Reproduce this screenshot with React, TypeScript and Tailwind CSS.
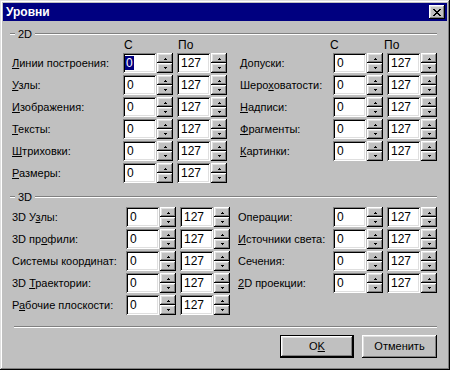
import React from 'react';

const raised =
  'shadow-[inset_-1px_-1px_0_#000,inset_1px_1px_0_#fff,inset_-2px_-2px_0_#808080,inset_2px_2px_0_#dfdfdf]';
const sunken =
  'shadow-[inset_1px_1px_0_#808080,inset_-1px_-1px_0_#fff,inset_2px_2px_0_#000,inset_-2px_-2px_0_#dfdfdf]';

type Label = [string, string, string];

const left2d: Label[] = [
  ['', 'Л', 'инии построения:'],
  ['', 'У', 'злы:'],
  ['', 'И', 'зображения:'],
  ['', 'Т', 'ексты:'],
  ['', 'Ш', 'триховки:'],
  ['', 'Р', 'азмеры:'],
];
const right2d: Label[] = [
  ['', 'Д', 'опуски:'],
  ['Шеро', 'х', 'оватости:'],
  ['', 'Н', 'адписи:'],
  ['', 'Ф', 'рагменты:'],
  ['', 'К', 'артинки:'],
];
const left3d: Label[] = [
  ['3D У', 'з', 'лы:'],
  ['3D пр', 'о', 'фили:'],
  ['Системы координат:', '', ''],
  ['3D ', 'Т', 'раектории:'],
  ['Р', 'а', 'бочие плоскости:'],
];
const right3d: Label[] = [
  ['Операции:', '', ''],
  ['', 'И', 'сточники света:'],
  ['Сечения:', '', ''],
  ['', '2', 'D проекции:'],
];

const Arrow = ({ down }: { down?: boolean }) => (
  <svg width="5" height="3" viewBox="0 0 5 3" shapeRendering="crispEdges">
    {down ? (
      <>
        <rect x="1" y="0" width="3" height="1" fill="#000" />
        <rect x="2" y="1" width="1" height="1" fill="#000" />
      </>
    ) : (
      <>
        <rect x="2" y="1" width="1" height="1" fill="#000" />
        <rect x="1" y="2" width="3" height="1" fill="#000" />
      </>
    )}
  </svg>
);

const Spin = () => (
  <div className="flex flex-col w-[16px] h-[20px]">
    <div className={`h-[10px] bg-[#c0c0c0] flex items-center justify-center ${raised}`}>
      <Arrow />
    </div>
    <div className={`h-[10px] bg-[#c0c0c0] flex items-center justify-center ${raised}`}>
      <Arrow down />
    </div>
  </div>
);

const Field = ({ value, selected }: { value: string; selected?: boolean }) => (
  <div className="flex gap-[1px]">
    <div
      className={`w-[33px] h-[20px] bg-white flex items-center text-[12px] text-black ${sunken} ${
        selected ? 'pl-[2px]' : 'pl-[4px]'
      }`}
    >
      {selected ? (
        <span className="bg-[#000080] text-white px-[1px] h-[14px] leading-[14px] inline-block">{value}</span>
      ) : (
        value
      )}
    </div>
    <Spin />
  </div>
);

const Text = ({ l }: { l: Label }) => (
  <span className="whitespace-nowrap">
    {l[0]}
    {l[1] && <span className="underline underline-offset-[1px]">{l[1]}</span>}
    {l[2]}
  </span>
);

const Half = ({ l, w, selected }: { l?: Label; w: string; selected?: boolean }) =>
  l ? (
    <div className="flex items-center">
      <div className={w}>
        <Text l={l} />
      </div>
      <Field value="0" selected={selected} />
      <div className="ml-[4px]">
        <Field value="127" />
      </div>
    </div>
  ) : (
    <div />
  );

const Group = ({ title }: { title: string }) => (
  <div className="flex items-center h-[10px]">
    <div className="w-[5px] h-[2px] border-t border-[#808080] border-b border-b-white" />
    <span className="px-[3px] leading-[10px]">{title}</span>
    <div className="flex-1 h-[2px] border-t border-[#808080] border-b border-b-white" />
  </div>
);

const Headers = ({ w }: { w: string }) => (
  <div className="flex text-[12px]">
    <div className={w} />
    <div className="w-[54px] pl-[1px]">С</div>
    <div className="w-[54px] pl-[1px]">По</div>
  </div>
);

const CloseGlyph = () => {
  const rows = ['XX....XX', '.XX..XX.', '..XXXX..', '...XX...', '..XXXX..', '.XX..XX.', 'XX....XX'];
  return (
    <svg width="8" height="7" viewBox="0 0 8 7" shapeRendering="crispEdges">
      {rows.flatMap((r, y) =>
        r.split('').map((c, x) => (c === 'X' ? <rect key={`${x}-${y}`} x={x} y={y} width="1" height="1" fill="#000" /> : null))
      )}
    </svg>
  );
};

export default function App() {
  return (
    <div
      className="w-[450px] h-[370px] bg-[#c0c0c0] px-[3px] pt-[3px] text-[11px] text-black shadow-[inset_-1px_-1px_0_#000,inset_1px_1px_0_#dfdfdf,inset_-2px_-2px_0_#808080,inset_2px_2px_0_#fff]"
      style={{ fontFamily: '"Liberation Sans", Arial, sans-serif' }}
    >
      {/* title bar */}
      <div className="h-[18px] bg-[#000080] flex items-center justify-between pl-[3px] pr-[2px]">
        <span className="text-white font-bold text-[12px]">Уровни</span>
        <div className={`w-[16px] h-[14px] bg-[#c0c0c0] flex items-center justify-center ${raised}`}>
          <CloseGlyph />
        </div>
      </div>

      <div className="pl-[7px] pr-[10px]">
        <div className="mt-[8px]">
          <Group title="2D" />
        </div>
        <div className="flex h-[10px] leading-[10px] pl-[2px] mt-[1px]">
          <div className="w-[229px]">
            <Headers w="w-[111px]" />
          </div>
          <Headers w="w-[93px]" />
        </div>
        <div className="flex flex-col gap-[2px] mt-[3px] pl-[2px]">
          {left2d.map((l, i) => (
            <div key={i} className="flex h-[20px]">
              <div className="w-[229px]">
                <Half l={l} w="w-[111px]" selected={i === 0} />
              </div>
              <Half l={right2d[i]} w="w-[93px]" />
            </div>
          ))}
        </div>

        <div className="mt-[9px]">
          <Group title="3D" />
        </div>
        <div className="flex flex-col gap-[2px] mt-[5px] pl-[2px]">
          {left3d.map((l, i) => (
            <div key={i} className="flex h-[20px]">
              <div className="w-[228px]">
                <Half l={l} w="w-[114px]" />
              </div>
              <Half l={right3d[i]} w="w-[95px]" />
            </div>
          ))}
        </div>

        <div className="mt-[11px] ml-[4px] h-[2px] border-t border-[#808080] border-b border-b-white" />

        <div className="flex justify-end gap-[8px] mt-[7px]">
          <div className="w-[74px] h-[23px] border border-black">
            <div className={`w-full h-full bg-[#c0c0c0] flex items-center justify-center ${raised}`}>
              <span>
                O<span className="underline underline-offset-[1px]">K</span>
              </span>
            </div>
          </div>
          <div className={`w-[75px] h-[23px] bg-[#c0c0c0] flex items-center justify-center ${raised}`}>
            Отменить
          </div>
        </div>
      </div>
    </div>
  );
}
